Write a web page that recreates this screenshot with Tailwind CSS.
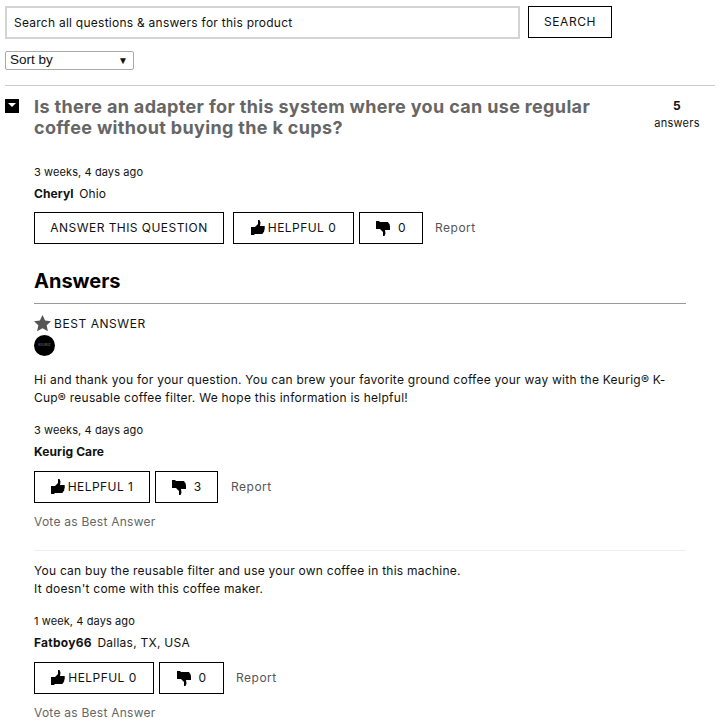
<html lang="en">
<head>
    <meta charset="utf-8"/>
    <title>Questions</title>
    <script src="https://cdn.jsdelivr.net/npm/@tailwindcss/browser@4"></script>
</head>
<body class="bg-white font-['Inter',sans-serif] text-[12px] tracking-[0.25px] text-[#111] overflow-hidden">
    <svg class="hidden">
        <symbol id="up" viewBox="0 0 14 16"><path d="M0 7h4l3-3V0h1.500l1 2.500L9 6h4.200c.8 0 .8 1.200.3 1.500.6.400.4 1.500-.2 1.700.5.400.3 1.400-.3 1.600.4.500.1 1.500-.6 1.500-.1 1.200-1 1.700-1.400 1.700H4l-1 1H0z"/></symbol>
        <symbol id="down" viewBox="0 0 14 16"><path d="M0 1h3l1 1h7.500c.4 0 1.300.5 1.400 1.700.7 0 1 1 .6 1.500.6.200.8 1.200.3 1.600.6.200.8 1.300.2 1.700.5.300.5 1.500-.3 1.500H9l.5 3.500-1 2.500H7v-4L4 9H0z"/></symbol>
    </svg>
    <div class="pl-[5px] pr-[10px] pt-[6px]">
        <div class="flex items-start gap-2">
            <input class="w-[515px] h-[33px] border-2 border-[#d4d4d4] px-[7px] text-[12px] tracking-[0.25px] placeholder:text-[#111]" placeholder="Search all questions &amp; answers for this product"/>
            <button class="w-[84px] h-[32px] border border-black tracking-[0.6px]">SEARCH</button>
        </div>
        <div class="mt-[12px] w-[129px] h-[19px] border border-[#aaa] rounded-[2px] flex items-center justify-between pl-1 pr-[5px] font-['Liberation_Sans',sans-serif] text-[13.5px] tracking-normal">
            <span>Sort by</span><span class="text-[10px]">▼</span>
        </div>
        <div class="mt-[15px] border-t border-[#ccc]"></div>

        <div class="flex mt-[13px]">
            <div class="w-[14px] h-[14px] bg-black flex justify-center pt-[4px] shrink-0">
                <div class="w-0 h-0 border-x-[4px] border-x-transparent border-t-[4px] border-t-white"></div>
            </div>
            <h1 class="ml-[15px] w-[590px] -mt-[3px] text-[#666] text-[18px] leading-[21px] font-bold tracking-[0.34px]">Is there an adapter for this system where you can use regular coffee without buying the k cups?</h1>
            <div class="ml-[22px] w-[62px] text-center -mt-[1px]">
                <div class="font-bold leading-[16px]">5</div>
                <div class="text-[11px] leading-[18px]">answers</div>
            </div>
        </div>

        <div class="ml-[29px] w-[652px]">
            <div class="mt-[25px] leading-[18px] text-[11px] tracking-[0.1px]">3 weeks, 4 days ago</div>
            <div class="mt-[4px] leading-[18px] tracking-[0.1px]"><b>Cheryl</b> <span class="ml-0.5">Ohio</span></div>
            <div class="flex items-center mt-[9px] gap-[5px]">
                <button class="w-[190px] h-[32px] border border-black tracking-[0.45px]">ANSWER THIS QUESTION</button>
                <button class="ml-[4px] w-[121px] h-[32px] border border-black flex items-center justify-center gap-[3px] tracking-[0.45px]"><svg class="w-[14px] h-[16px]"><use href="#up"/></svg>HELPFUL 0</button>
                <button class="w-[64px] h-[32px] border border-black flex items-center justify-center gap-2"><svg class="w-[14px] h-[16px]"><use href="#down"/></svg>0</button>
                <span class="ml-[7px] text-[#555] tracking-[0.5px]">Report</span>
            </div>

            <h2 class="mt-[24px] text-[20px] leading-[26px] font-bold text-black tracking-normal">Answers</h2>
            <div class="mt-[9px] border-t border-[#999]"></div>
            <div class="flex items-center gap-[3px] mt-[9px] h-[21px] -mb-[1px] tracking-[0.55px]">
                <svg class="w-[17px] h-[17px] fill-[#555] -mt-[1px]" viewBox="0 0 24 24"><path d="M12 0l3.700 7.800 8.300 1-6.100 5.800 1.700 8.400-7.600-4.200-7.600 4.200 1.700-8.400L0 8.800l8.300-1z"/></svg>BEST ANSWER
            </div>
            <div class="w-[21px] h-[21px] rounded-full bg-black mt-[2px] flex items-center justify-center text-[3px] text-[#888]">KEURIG</div>

            <p class="mt-[15px] leading-[18px]">Hi and thank you for your question. You can brew your favorite ground coffee your way with the Keurig® K-Cup® reusable coffee filter. We hope this information is helpful!</p>
            <div class="mt-[14px] leading-[18px] text-[11px] tracking-[0.1px]">3 weeks, 4 days ago</div>
            <div class="mt-[4px] leading-[18px] tracking-[0.1px]"><b>Keurig Care</b></div>
            <div class="flex items-center mt-[10px] gap-[5px]">
                <button class="w-[116px] h-[32px] border border-black flex items-center justify-center gap-[3px] tracking-[0.45px]"><svg class="w-[14px] h-[16px]"><use href="#up"/></svg>HELPFUL 1</button>
                <button class="w-[63px] h-[32px] border border-black flex items-center justify-center gap-2"><svg class="w-[14px] h-[16px]"><use href="#down"/></svg>3</button>
                <span class="ml-[8px] text-[#555] tracking-[0.5px]">Report</span>
            </div>
            <div class="mt-[10px] leading-[18px] text-[#666]">Vote as Best Answer</div>
            <div class="mt-[19px] border-t border-[#eee]"></div>

            <p class="mt-[11px] leading-[18px]">You can buy the reusable filter and use your own coffee in this machine.<br/>It doesn't come with this coffee maker.</p>
            <div class="mt-[14px] leading-[18px] text-[11px] tracking-[0.1px]">1 week, 4 days ago</div>
            <div class="mt-[4px] leading-[18px]"><b>Fatboy66</b> <span class="ml-0.5">Dallas, TX, USA</span></div>
            <div class="flex items-center mt-[10px] gap-[5px]">
                <button class="w-[120px] h-[32px] border border-black flex items-center justify-center gap-[3px] tracking-[0.45px]"><svg class="w-[14px] h-[16px]"><use href="#up"/></svg>HELPFUL 0</button>
                <button class="w-[65px] h-[32px] border border-black flex items-center justify-center gap-2"><svg class="w-[14px] h-[16px]"><use href="#down"/></svg>0</button>
                <span class="ml-[7px] text-[#555] tracking-[0.5px]">Report</span>
            </div>
            <div class="mt-[10px] leading-[18px] text-[#666]">Vote as Best Answer</div>
        </div>
    </div>
</body>
</html>
